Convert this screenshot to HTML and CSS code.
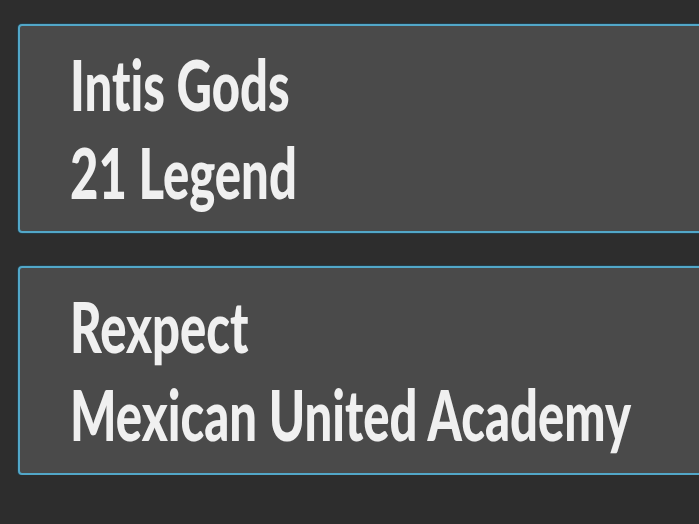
FILE: index.html
```html
<!DOCTYPE html>
<html lang="en">
<head>
<meta charset="utf-8">
<title>Teams</title>
<link rel="stylesheet" href="styles.css">
</head>
<body>
  <main class="list">
    <section class="card">
      <div class="line">Intis Gods</div>
      <div class="line">21 Legend</div>
    </section>
    <section class="card">
      <div class="line">Rexpect</div>
      <div class="line">Mexican United Academy</div>
    </section>
  </main>
</body>
</html>
```
FILE: styles.css
```css
html, body {
  margin: 0;
  padding: 0;
  background: #2d2d2d;
  overflow: hidden;
}

.list {
  display: flex;
  flex-direction: column;
  gap: 33px;
  padding: 24px 0 0 18px;
}

.card {
  width: 720px;
  height: 209px;
  box-sizing: border-box;
  background: #4a4a4a;
  border: 2px solid #52a7c8;
  border-radius: 4px;
  box-shadow: 0 0 0 1px rgba(30, 70, 90, 0.6);
  display: flex;
  flex-direction: column;
  padding: 14px 0 0 50px;
}

/* condensed display type: heavy sans squeezed horizontally */
.line {
  font-family: "Lato", "DejaVu Sans", sans-serif;
  font-weight: 900;
  font-size: 70px;
  line-height: 88px;
  color: #f0f0f0;
  white-space: nowrap;
  font-variant-ligatures: none;
  font-feature-settings: "liga" 0;
  transform: scaleX(0.70);
  transform-origin: left center;
}
```
